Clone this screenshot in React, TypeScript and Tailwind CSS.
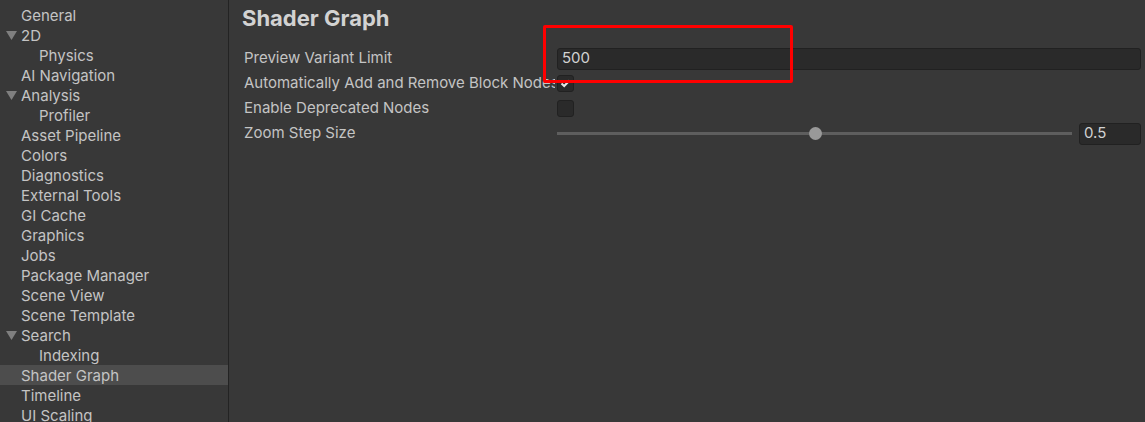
import React from "react";

type Item = { label: string; depth: number; expanded?: boolean; selected?: boolean };

const items: Item[] = [
  { label: "General", depth: 0 },
  { label: "2D", depth: 0, expanded: true },
  { label: "Physics", depth: 1 },
  { label: "AI Navigation", depth: 0 },
  { label: "Analysis", depth: 0, expanded: true },
  { label: "Profiler", depth: 1 },
  { label: "Asset Pipeline", depth: 0 },
  { label: "Colors", depth: 0 },
  { label: "Diagnostics", depth: 0 },
  { label: "External Tools", depth: 0 },
  { label: "GI Cache", depth: 0 },
  { label: "Graphics", depth: 0 },
  { label: "Jobs", depth: 0 },
  { label: "Package Manager", depth: 0 },
  { label: "Scene View", depth: 0 },
  { label: "Scene Template", depth: 0 },
  { label: "Search", depth: 0, expanded: true },
  { label: "Indexing", depth: 1 },
  { label: "Shader Graph", depth: 0, selected: true },
  { label: "Timeline", depth: 0 },
  { label: "UI Scaling", depth: 0 },
];

const Row = ({ label, children }: { label: string; children: React.ReactNode }) => (
  <div className="flex items-center h-[25px]">
    <div className="w-[311px] mr-[2px] shrink-0 overflow-hidden whitespace-nowrap">{label}</div>
    <div className="flex-1 flex items-center">{children}</div>
  </div>
);

const App = () => {
  return (
    <div
      className="w-[1145px] h-[422px] bg-[#383838] text-[#c4c4c4] text-[15px] flex overflow-hidden relative"
      style={{ fontFamily: 'Inter, "Noto Sans", sans-serif' }}
    >
      <div className="w-[229px] shrink-0 pt-[5px] border-r border-[#232323]">
        {items.map((it) => (
          <div
            key={it.label}
            className={`h-[20px] flex items-center leading-none ${it.selected ? "bg-[#4d4d4d]" : ""}`}
          >
            <div className="w-[21px] shrink-0 flex justify-center pl-[2px]">
              {it.expanded && (
                <svg width="11" height="9" viewBox="0 0 11 9">
                  <path d="M0 0 L11 0 L5.5 9 Z" fill="#7f7f7f" />
                </svg>
              )}
            </div>
            <span className={it.depth ? "pl-[18px]" : ""}>{it.label}</span>
          </div>
        ))}
      </div>

      <div className="flex-1 pl-[14px] pr-[4px]">
        <h1 className="text-[22px] font-bold text-[#d2d2d2] h-[36px] flex items-center -ml-[1px]">
          Shader Graph
        </h1>
        <div className="pt-[10px] pl-[1px]">
          <Row label="Preview Variant Limit">
            <div className="w-full h-[22px] bg-[#2a2a2a] border border-[#212121] rounded-[3px] flex items-center px-[4px] text-[#d2d2d2]">
              500
            </div>
          </Row>
          <Row label="Automatically Add and Remove Block Nodes">
            <div className="w-[17px] h-[17px] bg-[#2a2a2a] border border-[#212121] rounded-[3px] flex items-center justify-center">
              <svg width="11" height="9" viewBox="0 0 11 9">
                <path d="M1.5 4.5 L4.2 7 L9.5 1.5" stroke="#e6e6e6" strokeWidth="2" fill="none" />
              </svg>
            </div>
          </Row>
          <Row label="Enable Deprecated Nodes">
            <div className="w-[17px] h-[17px] bg-[#2a2a2a] border border-[#212121] rounded-[3px]" />
          </Row>
          <Row label="Zoom Step Size">
            <div className="flex-1 flex items-center relative h-[22px]">
              <div className="w-full h-[3px] bg-[#5e5e5e]" />
              <div className="absolute left-[252px] w-[13px] h-[13px] rounded-full bg-[#999999]" />
            </div>
            <div className="w-[62px] ml-[7px] h-[22px] bg-[#2a2a2a] border border-[#212121] rounded-[3px] flex items-center px-[4px] text-[#d2d2d2]">
              0.5
            </div>
          </Row>
        </div>
      </div>

      <div className="absolute left-[543px] top-[25px] w-[250px] h-[58px] border-[3px] border-[#ff0000] rounded-[2px]" />
    </div>
  );
};

export default App;
